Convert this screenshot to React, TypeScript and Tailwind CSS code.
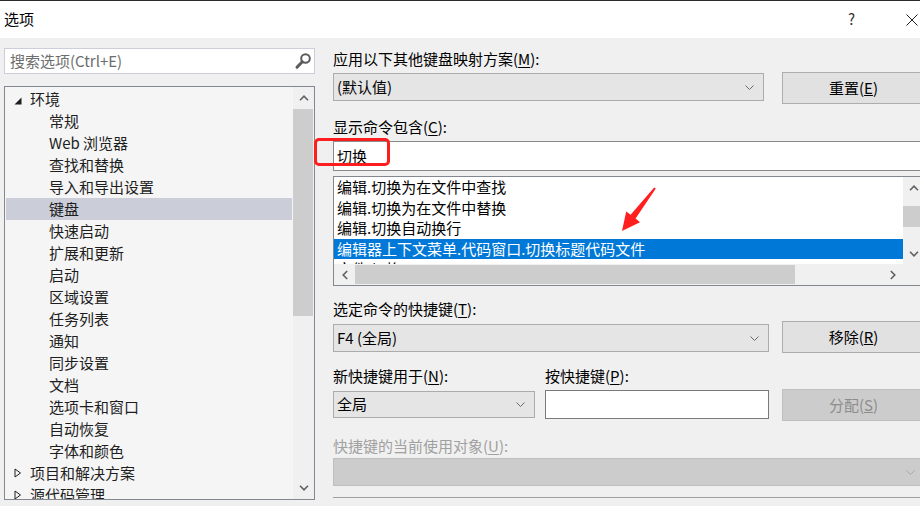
import type { FC, ReactNode } from 'react';

type Dir = 'up' | 'down' | 'left' | 'right';

const chevronPaths: Record<Dir, string> = {
	up: 'M1 5.2 L5 1.2 L9 5.2',
	down: 'M1 0.8 L5 4.8 L9 0.8',
	left: 'M5.2 1 L1.2 5 L5.2 9',
	right: 'M0.8 1 L4.8 5 L0.8 9',
};

// Scrollbar arrow glyph, drawn like the Windows 10 ones
function Chevron({ dir }: { dir: Dir }) {
	const vertical = dir === 'up' || dir === 'down';

	return (
		<svg
			width={vertical ? 10 : 6}
			height={vertical ? 6 : 10}
			viewBox={vertical ? '0 0 10 6' : '0 0 6 10'}
			className="text-[#606060]"
		>
			<path d={chevronPaths[dir]} fill="none" stroke="currentColor" strokeWidth="1.6" />
		</svg>
	);
}

function ComboArrow({ muted }: { muted?: boolean }) {
	return (
		<svg width="9" height="5" viewBox="0 0 9 5" className={muted ? 'text-[#a8a8a8]' : 'text-[#6a6a6a]'}>
			<path d="M0.5 0.5 L4.5 4.5 L8.5 0.5" fill="none" stroke="currentColor" strokeWidth="1" />
		</svg>
	);
}

// Label text with the accelerator letter underlined, e.g. 方案(M):
function Label({ text, k, disabled }: { text: string; k: string; disabled?: boolean }) {
	return (
		<div className={`h-[20px] text-[15px] leading-[20px] ${disabled ? 'text-[#a0a0a0]' : 'text-black'}`}>
			{text}(<u className="underline-offset-2">{k}</u>):
		</div>
	);
}

const ComboBox: FC<{ value?: string; className: string; disabled?: boolean }> = function ComboBox({
	value,
	className,
	disabled,
}) {
	return (
		<div
			className={`flex shrink-0 items-center justify-between border pr-[9px] pl-[3px] text-[15px] ${
				disabled ? 'border-[#bfbfbf] bg-[#cccccc]' : 'border-[#acacac] bg-[#e5e5e5] text-black'
			} ${className}`}
		>
			<span>{value}</span>
			<ComboArrow muted={disabled} />
		</div>
	);
};

function DialogButton({ children, disabled }: { children: ReactNode; disabled?: boolean }) {
	return (
		<div
			className={`flex h-[32px] w-[143px] shrink-0 items-center justify-center border text-[15px] ${
				disabled
					? 'border-[#bfbfbf] bg-[#cccccc] text-[#8c8c8c]'
					: 'border-[#adadad] bg-[#e1e1e1] text-black'
			}`}
		>
			{children}
		</div>
	);
}

type TreeRow = { label: string; level: 0 | 1; expanded?: boolean; selected?: boolean };

const treeRows: TreeRow[] = [
	{ label: '环境', level: 0, expanded: true },
	{ label: '常规', level: 1 },
	{ label: 'Web 浏览器', level: 1 },
	{ label: '查找和替换', level: 1 },
	{ label: '导入和导出设置', level: 1 },
	{ label: '键盘', level: 1, selected: true },
	{ label: '快速启动', level: 1 },
	{ label: '扩展和更新', level: 1 },
	{ label: '启动', level: 1 },
	{ label: '区域设置', level: 1 },
	{ label: '任务列表', level: 1 },
	{ label: '通知', level: 1 },
	{ label: '同步设置', level: 1 },
	{ label: '文档', level: 1 },
	{ label: '选项卡和窗口', level: 1 },
	{ label: '自动恢复', level: 1 },
	{ label: '字体和颜色', level: 1 },
	{ label: '项目和解决方案', level: 0, expanded: false },
	{ label: '源代码管理', level: 0, expanded: false },
];

const commands = [
	'编辑.切换为在文件中查找',
	'编辑.切换为在文件中替换',
	'编辑.切换自动换行',
	'编辑器上下文菜单.代码窗口.切换标题代码文件',
	'文件.切换',
];

function TreeToggle({ expanded }: { expanded?: boolean }) {
	return expanded ? (
		<svg width="8" height="8" viewBox="0 0 8 8" className="mt-[3px]">
			<polygon points="7.5,0.5 7.5,7.5 0.5,7.5" fill="#1e1e1e" />
		</svg>
	) : (
		<svg width="8" height="10" viewBox="0 0 8 10">
			<polygon points="1,1 6.5,5 1,9" fill="none" stroke="#1e1e1e" strokeWidth="1" />
		</svg>
	);
}

function OptionsTree() {
	return (
		<div className="mt-[12px] flex h-[414px] overflow-hidden border border-[#828790] bg-[#f5f5f5]">
			<div className="flex-1 overflow-hidden pt-px">
				{treeRows.map((row) => (
					<div
						key={row.label}
						className={`mx-px flex h-[22px] items-center text-[15px] leading-[22px] whitespace-nowrap text-[#1e1e1e] ${
							row.selected ? 'bg-[#cbcdd9]' : ''
						} ${row.level === 0 ? 'pl-[8px]' : 'pl-[43px]'}`}
					>
						{row.level === 0 ? (
							<span className="flex w-[16px] items-center">
								<TreeToggle expanded={row.expanded} />
							</span>
						) : undefined}
						<span>{row.label}</span>
					</div>
				))}
			</div>
			<div className="flex w-[21px] flex-col bg-[#f0f0f0]">
				<div className="flex h-[22px] items-center justify-center">
					<Chevron dir="up" />
				</div>
				<div className="mr-px h-[207px] bg-[#cdcdcd]" />
				<div className="flex-1" />
				<div className="flex h-[22px] items-center justify-center">
					<Chevron dir="down" />
				</div>
			</div>
		</div>
	);
}

function CommandList() {
	return (
		<div className="mt-[5px] flex h-[110px] w-[592px] flex-col border border-[#828790] bg-white">
			<div className="flex h-[87px]">
				<div className="flex-1 overflow-hidden">
					{commands.map((command, index) => (
						<div
							key={command}
							className={`h-[20.5px] pl-[3px] text-[15px] leading-[20.5px] whitespace-nowrap ${
								index === 3 ? 'bg-[#0078d7] text-white' : 'text-black'
							}`}
						>
							{command}
						</div>
					))}
				</div>
				<div className="flex w-[21px] flex-col bg-[#f0f0f0]">
					<div className="flex h-[21px] items-center justify-center">
						<Chevron dir="up" />
					</div>
					<div className="mt-[8px] h-[21px] bg-[#cdcdcd]" />
					<div className="flex-1" />
					<div className="flex h-[21px] items-center justify-center">
						<Chevron dir="down" />
					</div>
				</div>
			</div>
			<div className="flex h-[21px] bg-[#f0f0f0]">
				<div className="flex w-[21px] items-center justify-center">
					<Chevron dir="left" />
				</div>
				<div className="my-px w-[440px] bg-[#cdcdcd]" />
				<div className="flex-1" />
				<div className="flex w-[21px] items-center justify-center">
					<Chevron dir="right" />
				</div>
				<div className="w-[21px]" />
			</div>
		</div>
	);
}

function SearchIcon() {
	return (
		<svg width="18" height="18" viewBox="0 0 18 18" className="text-[#5b5b5b]">
			<circle cx="11.5" cy="6.5" r="4.3" fill="none" stroke="currentColor" strokeWidth="2" />
			<path d="M8.3 9.8 L3 15.2" stroke="currentColor" strokeWidth="3" strokeLinecap="round" />
		</svg>
	);
}

export default function App() {
	return (
		<div className="relative h-[506px] w-[920px] overflow-hidden bg-[#f0f0f0] font-['Microsoft_YaHei_UI','Noto_Sans_CJK_SC',sans-serif]">
			{/* Title bar */}
			<div className="flex h-[38px] items-center border-t border-[#2b2b2b] bg-white pl-[4px] text-[15px] text-black">
				<span>选项</span>
				<span className="ml-auto text-[15px] text-[#333]">?</span>
				<svg width="12" height="12" viewBox="0 0 12 12" className="mr-[2px] ml-[51px] text-[#222]">
					<path d="M0.5 0.5 L11.5 11.5 M11.5 0.5 L0.5 11.5" stroke="currentColor" strokeWidth="1" />
				</svg>
			</div>

			<div className="flex">
				{/* Left: search + options tree */}
				<div className="ml-[4px] w-[311px] shrink-0 pt-[10px]">
					<div className="flex h-[26px] items-center justify-between border border-[#cccedb] bg-white pr-[2px] pl-[5px]">
						<span className="text-[15px] text-[#6d6d6d]">搜索选项(Ctrl+E)</span>
						<SearchIcon />
					</div>
					<OptionsTree />
				</div>

				{/* Right: keyboard page */}
				<div className="ml-[18px] flex w-[592px] shrink-0 flex-col pt-[11px]">
					<Label text="应用以下其他键盘映射方案" k="M" />
					<div className="mt-[3px] flex items-start gap-[18px]">
						<ComboBox value="(默认值)" className="mt-px h-[28px] w-[431px]" />
						<DialogButton>
							重置(<u>E</u>)
						</DialogButton>
					</div>

					<div className="mt-[13px]">
						<Label text="显示命令包含" k="C" />
					</div>
					<div className="mt-[4px] flex h-[30px] items-center border border-[#8a8a8a] bg-white pl-[3px] text-[15px] text-black">
						切换
					</div>
					<CommandList />

					<div className="mt-[13px]">
						<Label text="选定命令的快捷键" k="T" />
					</div>
					<div className="mt-[2px] flex items-start gap-[13px]">
						<ComboBox value="F4 (全局)" className="mt-[3px] h-[28px] w-[436px]" />
						<DialogButton>
							移除(<u>R</u>)
						</DialogButton>
					</div>

					<div className="mt-[13px] flex">
						<div className="w-[212px]">
							<Label text="新快捷键用于" k="N" />
						</div>
						<Label text="按快捷键" k="P" />
					</div>
					<div className="mt-[3px] flex items-start">
						<ComboBox value="全局" className="mt-[2px] h-[27px] w-[202px]" />
						<div className="mt-px ml-[10px] h-[29px] w-[224px] border border-[#7a7a7a] bg-white" />
						<div className="ml-[13px]">
							<DialogButton disabled>
								分配(<u>S</u>)
							</DialogButton>
						</div>
					</div>

					<div className="mt-[15px]">
						<Label text="快捷键的当前使用对象" k="U" disabled />
					</div>
					<ComboBox disabled className="mt-[2px] h-[28px] w-[592px]" />
					<div className="mt-[11px] h-px w-[592px] bg-[#a0a0a0]" />
				</div>
			</div>

			{/* Annotation overlays: red highlight box and arrow */}
			<div className="pointer-events-none absolute top-[138px] left-[314px] h-[28px] w-[76px] rounded-[5px] border-[3px] border-[#ff1e1e]" />
			<svg className="pointer-events-none absolute top-0 left-0" width="920" height="506">
				<polygon
					points="655.8,188.6 635.6,218.6 640,222.2 622,231 626.2,211.6 630.6,214.8 654.2,187.4"
					fill="#ff1f1f"
				/>
			</svg>
		</div>
	);
}
